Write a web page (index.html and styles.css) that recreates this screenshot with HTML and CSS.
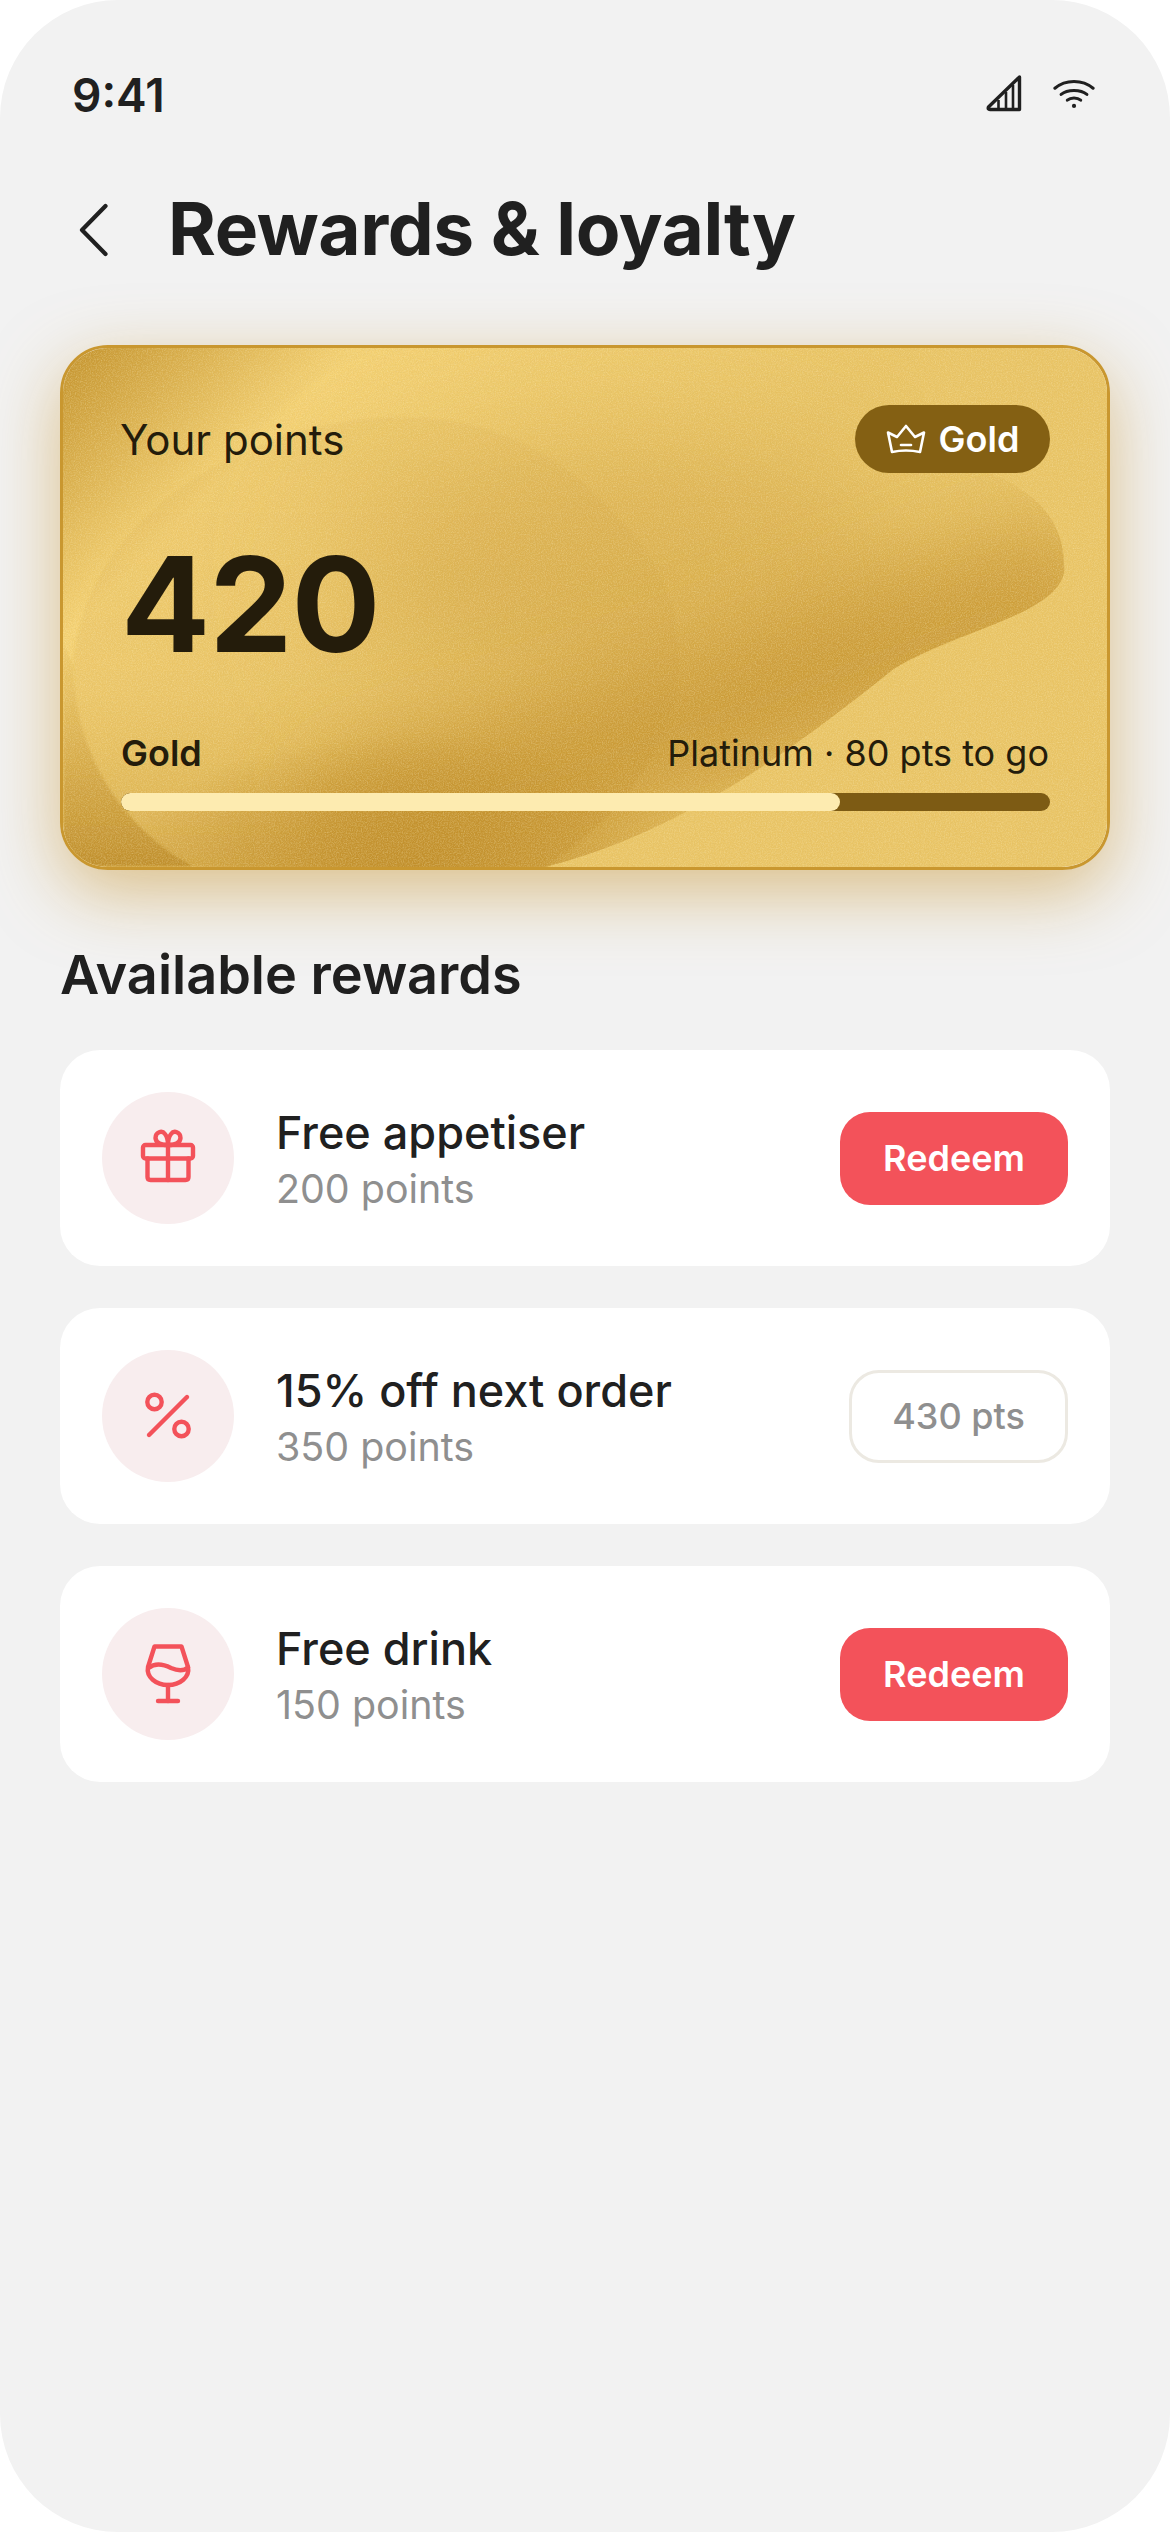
FILE: index.html
```html
<!DOCTYPE html>
<html lang="en">
<head>
  <meta charset="UTF-8">
  <title>Rewards &amp; loyalty</title>
  <link rel="stylesheet" href="styles.css">
</head>
<body>
  <div class="phone">
    <div class="status">
      <span class="time">9:41</span>
      <div class="status-icons">
        <svg class="signal" width="36" height="38" viewBox="0 0 36 38" fill="none" stroke="#202020" stroke-width="3.4" stroke-linejoin="round">
          <path d="M33.5 3 L2.5 33 Q1.5 35.5 4 35.5 H33.5 Z"/>
          <path d="M12.5 26 V35 M20 18 V35 M27 11 V35" stroke-width="2.6"/>
        </svg>
        <svg class="wifi" width="42" height="31" viewBox="0 0 44 32" fill="none" stroke="#202020" stroke-width="3.2" stroke-linecap="round">
          <path d="M2 10.5 C13 1 31 1 42 10.5"/>
          <path d="M8.5 17 C15 11.5 29 11.5 35.5 17"/>
          <path d="M15 23 C18.5 20 25.5 20 29 23"/>
          <circle cx="22" cy="29" r="2.2" fill="#202020" stroke="none"/>
        </svg>
      </div>
    </div>

    <header class="topbar">
      <svg class="back" width="32" height="54" viewBox="0 0 32 54" fill="none" stroke="#202020" stroke-width="4.2" stroke-linecap="round" stroke-linejoin="round">
        <path d="M26.5 3 L3 27 L26.5 51"/>
      </svg>
      <h1>Rewards &amp; loyalty</h1>
    </header>

    <section class="card">
      <svg class="card-bg" viewBox="0 0 1050 525" preserveAspectRatio="none">
        <defs>
          <linearGradient id="metal" gradientUnits="userSpaceOnUse" x1="0" y1="0" x2="420" y2="420">
            <stop offset="0" stop-color="#c3922c"/>
            <stop offset="0.35" stop-color="#f5d274"/>
            <stop offset="1" stop-color="#eac566"/>
          </linearGradient>
          <linearGradient id="wedge" x1="0" y1="1" x2="0" y2="0">
            <stop offset="0" stop-color="#bd8b28" stop-opacity="0.95"/>
            <stop offset="1" stop-color="#c3912c" stop-opacity="0.1"/>
          </linearGradient>
          <linearGradient id="leftBlob" x1="0" y1="0" x2="0" y2="1">
            <stop offset="0" stop-color="#cf9f3e" stop-opacity="0.14"/>
            <stop offset="0.6" stop-color="#c89836" stop-opacity="0.16"/>
            <stop offset="1" stop-color="#c08d29" stop-opacity="0.45"/>
          </linearGradient>
          <radialGradient id="bottomDark">
            <stop offset="0" stop-color="#c08d29" stop-opacity="0.95"/>
            <stop offset="0.55" stop-color="#c08d29" stop-opacity="0.5"/>
            <stop offset="1" stop-color="#c08d29" stop-opacity="0"/>
          </radialGradient>
          <clipPath id="blobClip">
            <path d="M134 525 C50 480 12 400 10 320 L10 0 H860 C860 80 900 110 940 130 C985 150 1008 180 1007 226 C1000 270 900 285 835 325 C730 410 620 490 485 525 Z"/>
          </clipPath>
          <filter id="edge"><feGaussianBlur stdDeviation="1.5"/></filter>
          <filter id="soft" x="-30%" y="-60%" width="160%" height="220%"><feGaussianBlur stdDeviation="44"/></filter>
          <filter id="softer" x="-40%" y="-60%" width="180%" height="220%"><feGaussianBlur stdDeviation="70"/></filter>
          <filter id="grainLight" x="0" y="0" width="100%" height="100%">
            <feTurbulence type="fractalNoise" baseFrequency="0.8" numOctaves="2" seed="4"/>
            <feColorMatrix values="0 0 0 0 1  0 0 0 0 0.88  0 0 0 0 0.55  1.6 0 0 0 -0.62"/>
          </filter>
          <filter id="grainDark" x="0" y="0" width="100%" height="100%">
            <feTurbulence type="fractalNoise" baseFrequency="0.85" numOctaves="2" seed="9"/>
            <feColorMatrix values="0 0 0 0 0.62  0 0 0 0 0.44  0 0 0 0 0.12  1.6 0 0 0 -0.62"/>
          </filter>
        </defs>
        <rect width="1050" height="525" fill="url(#metal)"/>
        <path d="M0 300 L10 320 C12 400 50 480 134 525 H0 Z" fill="url(#wedge)" filter="url(#edge)"/>
        <path d="M134 525 C50 480 12 400 10 320 C20 170 190 68 345 70 C460 72 530 130 590 210 C640 290 640 420 485 525 Z" fill="url(#leftBlob)" filter="url(#edge)"/>
        <g clip-path="url(#blobClip)">
          <ellipse cx="570" cy="230" rx="290" ry="130" fill="#cc9c3a" opacity="0.5" filter="url(#softer)"/>
          <path d="M320 480 C520 435 800 320 985 250" fill="none" stroke="#c4922e" stroke-width="150" stroke-linecap="round" filter="url(#soft)" opacity="0.8"/>
          <ellipse cx="350" cy="530" rx="300" ry="140" fill="url(#bottomDark)"/>
        </g>
        <rect width="1050" height="525" filter="url(#grainLight)" opacity="0.4"/>
        <rect width="1050" height="525" filter="url(#grainDark)" opacity="0.3"/>
      </svg>

      <div class="card-top">
        <span class="card-label">Your points</span>
        <span class="tier-pill">
          <svg width="40" height="30" viewBox="0 0 40 30" fill="none" stroke="#fff" stroke-width="2.6" stroke-linejoin="round" stroke-linecap="round">
            <path d="M2 8.5 L11 13 L20 2 L29 13 L38 8.5 L34 28 Q20 25 6 28 Z"/>
            <path d="M15 21 H25"/>
          </svg>
          Gold
        </span>
      </div>
      <div class="points">420</div>
      <div class="progress-labels">
        <span class="current">Gold</span>
        <span class="next">Platinum · 80 pts to go</span>
      </div>
      <div class="track"><div class="fill" style="width: 77.4%"></div></div>
    </section>

    <h2>Available rewards</h2>

    <div class="rewards">
      <div class="reward">
        <div class="reward-icon">
          <svg width="66" height="66" viewBox="0 0 66 66" fill="none" stroke="#f3525a" stroke-width="4.4" stroke-linejoin="round" stroke-linecap="round">
            <rect x="8" y="20" width="50" height="13.5" rx="2.5"/>
            <path d="M12.5 33.5 V52 Q12.5 55 15.5 55 H50.5 Q53.5 55 53.5 52 V33.5"/>
            <path d="M33 20 V55"/>
            <path d="M33 20 C28 20 21 19 20.5 13 C20.5 7 27 5 30 9 C32 11.5 33 16 33 20 C33 16 34 11.5 36 9 C39 5 45.5 7 45.5 13 C45 19 38 20 33 20 Z"/>
          </svg>
        </div>
        <div class="reward-text">
          <div class="reward-name">Free appetiser</div>
          <div class="reward-cost">200 points</div>
        </div>
        <button class="btn">Redeem</button>
      </div>

      <div class="reward">
        <div class="reward-icon">
          <svg width="66" height="66" viewBox="0 0 66 66" fill="none" stroke="#f3525a" stroke-width="4.4" stroke-linecap="round">
            <circle cx="19.5" cy="19" r="7.2"/>
            <circle cx="46.5" cy="46" r="7.2"/>
            <path d="M52 14 L14 52"/>
          </svg>
        </div>
        <div class="reward-text">
          <div class="reward-name">15% off next order</div>
          <div class="reward-cost">350 points</div>
        </div>
        <button class="btn btn-locked">430 pts</button>
      </div>

      <div class="reward">
        <div class="reward-icon">
          <svg width="66" height="66" viewBox="0 0 66 66" fill="none" stroke="#f3525a" stroke-width="4.4" stroke-linejoin="round" stroke-linecap="round">
            <path d="M19.5 5.5 H46.5 L53 26 C55 36 45 44 33 44 C21 44 11 36 13 26 Z"/>
            <path d="M13.5 27 C21 21 30 24 36 27 C43 30 49 30 53 26.5"/>
            <path d="M33 44 V60"/>
            <path d="M23 60 H43"/>
          </svg>
        </div>
        <div class="reward-text">
          <div class="reward-name">Free drink</div>
          <div class="reward-cost">150 points</div>
        </div>
        <button class="btn">Redeem</button>
      </div>
    </div>
  </div>
</body>
</html>
```

FILE: styles.css
```css
* { box-sizing: border-box; }
html, body { margin: 0; padding: 0; background: #fff; }
body { font-family: Inter, "Noto Sans", sans-serif; color: #202020; }

.phone { width: 1170px; height: 2532px; background: #f2f2f2; border-radius: 118px; overflow: hidden; padding: 0 60px; }

.status { height: 186px; display: flex; justify-content: space-between; align-items: flex-start; padding: 68px 0 0 12px; }
.time { font-size: 46px; line-height: 54px; font-weight: 600; }
.status-icons { display: flex; align-items: flex-start; gap: 31px; padding: 4px 15px 0 0; }
.signal { margin-top: 2px; }
.wifi { margin-top: 6px; }

.topbar { height: 85px; display: flex; align-items: center; gap: 57px; padding-left: 19px; }
.back { flex: none; margin-top: 3px; }
h1 { margin: 0; font-size: 73px; line-height: 85px; font-weight: 700; letter-spacing: -0.4px; }

.card { position: relative; margin-top: 74px; height: 525px; border: 3px solid #c9972f; border-radius: 48px; padding: 57px 57px 0 58px; box-shadow: 0 22px 70px rgba(200, 150, 50, 0.55); color: #241c0b; }
.card-bg { position: absolute; left: 0; top: 0; width: 100%; height: 100%; border-radius: 45px; }
.card-top, .points, .progress-labels, .track { position: relative; }

.card-top { display: flex; justify-content: space-between; align-items: flex-start; height: 68px; }
.card-label { font-size: 42px; line-height: 70px; margin-left: -1px; }
.tier-pill { height: 68px; width: 195px; background: #846013; color: #fff; border-radius: 34px; display: flex; align-items: center; justify-content: center; gap: 13px; font-size: 36px; font-weight: 600; }

.points { margin-top: 61px; font-size: 132px; line-height: 140px; font-weight: 700; letter-spacing: -1px; }

.progress-labels { margin-top: 56px; display: flex; justify-content: space-between; align-items: baseline; font-size: 36px; line-height: 46px; }
.current { font-weight: 600; }
.next { padding-right: 1px; }

.track { margin-top: 17px; height: 18px; background: #7d5b14; border-radius: 9px; overflow: hidden; }
.fill { height: 100%; background: #fdebb0; border-radius: 9px; }

h2 { margin: 72px 0 0; font-size: 54px; line-height: 66px; font-weight: 600; }

.rewards { margin-top: 42px; display: flex; flex-direction: column; gap: 42px; }
.reward { height: 216px; background: #fff; border-radius: 40px; padding: 0 42px; display: flex; align-items: center; }
.reward-icon { flex: none; width: 132px; height: 132px; border-radius: 50%; background: #f8edee; display: flex; align-items: center; justify-content: center; }
.reward-text { flex: 1; margin-left: 42px; padding-top: 3px; }
.reward-name { font-size: 45px; line-height: 54px; font-weight: 450; }
.reward-cost { font-size: 39.4px; line-height: 50px; color: #8f8f8f; margin-top: 4px; }

.btn { flex: none; width: 228px; height: 93px; border: 0; border-radius: 30px; background: #f3525a; color: #fff; font-family: inherit; font-size: 36px; font-weight: 600; padding: 0; }
.btn-locked { width: 219px; background: #fff; border: 3px solid #ece9e2; color: #8f8f8f; font-weight: 500; }
```
